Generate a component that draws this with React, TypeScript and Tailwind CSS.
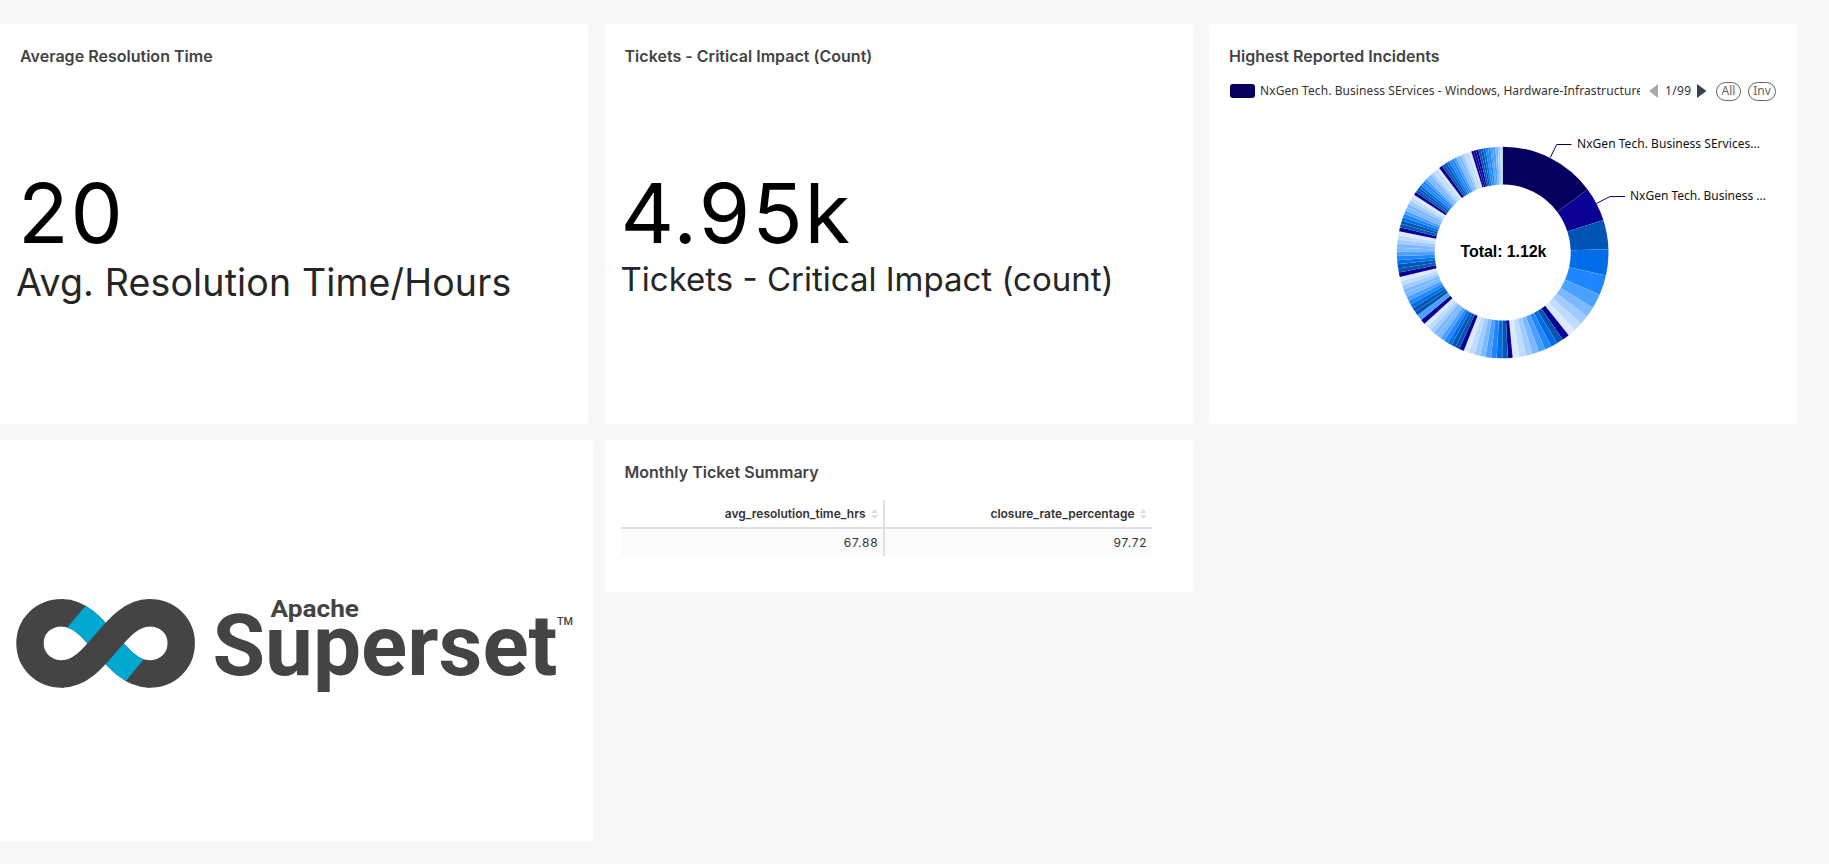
import React from "react";

const BLUES = ["#0055b3", "#006de8", "#1f86ff", "#4a9fff", "#7bb8ff", "#a0ccff", "#bfdcff", "#dbeaff"];
const NAVY = "#0a0096";

type Slice = { from: number; to: number; color: string };

const LEADING: Slice[] = [
  { from: 0, to: 53.4, color: "#05005e" },
  { from: 53.4, to: 72.1, color: NAVY },
  { from: 72.1, to: 88.2, color: BLUES[0] },
  { from: 88.2, to: 102.5, color: BLUES[1] },
  { from: 102.5, to: 113.6, color: BLUES[2] },
  { from: 113.6, to: 121.5, color: BLUES[3] },
  { from: 121.5, to: 127.2, color: BLUES[4] },
  { from: 127.2, to: 132.4, color: BLUES[5] },
  { from: 132.4, to: 137, color: BLUES[6] },
  { from: 137, to: 141.4, color: BLUES[7] },
];

// start, end of the navy slice, end of the cycle, number of blue slices
const CYCLES: [number, number, number, number][] = [
  [141.4, 145.4, 174.6, 8],
  [174.6, 177.2, 201.6, 8],
  [201.6, 204.3, 227.7, 10],
  [233.6, 233.6, 256.6, 10],
  [256.6, 259.1, 281.6, 10],
  [281.6, 283.8, 303.1, 10],
  [303.1, 304.9, 323.1, 12],
  [323.1, 325.1, 342.7, 12],
];

function buildSlices(): Slice[] {
  const out = [...LEADING];
  for (const [start, navyEnd, end, n] of CYCLES) {
    if (navyEnd > start) out.push({ from: start, to: navyEnd, color: NAVY });
    const step = (end - navyEnd) / n;
    for (let i = 0; i < n; i++) {
      out.push({
        from: navyEnd + i * step,
        to: navyEnd + (i + 1) * step,
        color: BLUES[Math.floor((i * BLUES.length) / n)],
      });
    }
  }
  out.push({ from: 227.7, to: 230.4, color: NAVY }, { from: 230.4, to: 233.6, color: BLUES[3] });
  for (let i = 0; i < 3; i++) out.push({ from: 342.7 + i * 1.33, to: 344.03 + i * 1.33, color: NAVY });
  const tail = [0, 0, 1, 2, 2, 3, 3, 4, 5, 6];
  tail.forEach((c, i) => out.push({ from: 346.7 + i * 1.33, to: 348.03 + i * 1.33, color: BLUES[c] }));
  return out;
}

function arc(from: number, to: number) {
  const cx = 293.7;
  const cy = 228.5;
  const p = (deg: number, r: number) => {
    const a = (deg * Math.PI) / 180;
    return `${(cx + r * Math.sin(a)).toFixed(2)} ${(cy - r * Math.cos(a)).toFixed(2)}`;
  };
  return `M${p(from, 105.8)}A105.8 105.8 0 0 1 ${p(to, 105.8)}L${p(to, 68)}A68 68 0 0 0 ${p(from, 68)}Z`;
}

function Title({ children }: { children: React.ReactNode }) {
  return (
    <h2 className="text-base leading-6 font-semibold tracking-[0.02px] text-[#434343] whitespace-nowrap">{children}</h2>
  );
}

function Donut() {
  return (
    <svg className="absolute inset-0" width="588" height="400" viewBox="0 0 588 400">
      {buildSlices().map((s, i) => (
        <path key={i} d={arc(s.from, s.to)} fill={s.color} stroke="#fff" strokeOpacity="0.3" strokeWidth="0.15" />
      ))}
      <path d="M341.3 133.5L347.7 120.5H362.5" fill="none" stroke="#05005e" />
      <path d="M387.5 179.5L401 172.5H416" fill="none" stroke={NAVY} />
      <g className="font-['Noto_Sans',sans-serif]" fontSize="12" fill="#111">
        <text x="368" y="124" textLength="183">NxGen Tech. Business SErvices...</text>
        <text x="421" y="176" textLength="136">NxGen Tech. Business ...</text>
      </g>
      <text x="251.5" y="233" textLength="86" className="font-['Liberation_Sans',sans-serif]" fontSize="16" fontWeight="700">
        Total: 1.12k
      </text>
    </svg>
  );
}

function Legend() {
  return (
    <div className="mt-[11px] ml-px flex h-6 items-center font-['Noto_Sans',sans-serif] text-xs text-[#333]">
      <span className="h-[14px] w-[25px] shrink-0 rounded-[3px] bg-[#05005e]" />
      <svg className="ml-[5px] shrink-0" width="380" height="24">
        <text x="0" y="16" fontSize="12" fill="#333" textLength="383">
          NxGen Tech. Business SErvices - Windows, Hardware-Infrastructure
        </text>
      </svg>
      <svg className="ml-[9px] shrink-0" width="9" height="16"><path d="M9 1V15L0 8Z" fill="#aaa" /></svg>
      <svg className="ml-[7px] shrink-0" width="26" height="24"><text x="0" y="16" fontSize="12" fill="#333" textLength="26">1/99</text></svg>
      <svg className="ml-[6px] shrink-0" width="10" height="16"><path d="M0 1V15L9.5 8Z" fill="#2f4554" /></svg>
      <span className="ml-[9px] flex h-[19px] w-[25px] shrink-0 items-center justify-center rounded-full border border-[#666] text-[#666]">All</span>
      <span className="ml-[7px] flex h-[19px] w-[28px] shrink-0 items-center justify-center rounded-full border border-[#666] text-[#666]">Inv</span>
    </div>
  );
}

function SupersetLogo() {
  return (
    <svg width="592" height="401" viewBox="0 440 592 401">
      <defs>
        <clipPath id="band">
          <path d="M96 593.5L60 636L117 692L152 649Z" />
        </clipPath>
      </defs>
      <g fill="none" strokeWidth="27.4">
        <path stroke="#444" d="M64 612.7H62C43.5 612.7 30 626 30 643.3S43.5 674 62 674H64M147.3 612.7H149.3C168 612.7 181.2 626 181.2 643.3S168 674 149.3 674H147.3" />
        <path stroke="#444" d="M62 612.7C97.5 612.7 113.8 674 149.3 674" />
        <path stroke="#00a8cf" clipPath="url(#band)" d="M62 612.7C97.5 612.7 113.8 674 149.3 674" />
        <path stroke="#444" d="M149.3 612.7C113.8 612.7 97.5 674 62 674" />
      </g>
      <g className="font-[Roboto,sans-serif]" fill="#444">
        <text x="212.5" y="674.8" fontSize="86" fontWeight="700" textLength="345" lengthAdjust="spacingAndGlyphs">Superset</text>
        <text x="270.5" y="617" fontSize="24" fontWeight="700" textLength="88.5" lengthAdjust="spacingAndGlyphs">Apache</text>
        <text x="557" y="625" fontSize="11" fontWeight="500" textLength="16" lengthAdjust="spacingAndGlyphs">TM</text>
      </g>
    </svg>
  );
}

function SortIcon() {
  return (
    <svg width="7" height="12" viewBox="0 0 7 12" fill="#dedede">
      <path d="M3.5 1L6.8 5H.2ZM3.5 11L.2 7H6.8Z" />
    </svg>
  );
}

function SummaryTable() {
  return (
    <div className="mt-4 ml-[-4px] grid w-[531px] grid-cols-[264px_267px] text-xs text-[#333]">
      <div className="flex h-[29px] items-center justify-end gap-[5px] border-r-2 border-b-2 border-[#e0e0e0] pr-[5px] text-[12px] font-semibold">
        avg_resolution_time_hrs <SortIcon />
      </div>
      <div className="flex h-[29px] items-center justify-end gap-[5px] border-b-2 border-[#e0e0e0] pr-[5px] text-[12px] font-semibold">
        closure_rate_percentage <SortIcon />
      </div>
      <div className="flex h-[27px] items-center justify-end border-r-2 border-[#e0e0e0] bg-[#fbfbfb] pr-[4px] tracking-[0.8px]">67.88</div>
      <div className="flex h-[27px] items-center justify-end bg-[#fbfbfb] pr-1 tracking-[0.8px]">97.72</div>
    </div>
  );
}

export default function App() {
  return (
    <main className="h-[864px] w-[1829px] overflow-hidden bg-[#f7f7f7] pt-6 font-[Inter,sans-serif]">
      <div className="flex gap-[16.5px]">
        <section className="h-[400px] w-[588px] rounded-r-[4px] bg-white pt-5 pl-5">
          <Title>Average Resolution Time</Title>
          <div className="-ml-[2px] mt-[95px] text-[83px] leading-[100px] tracking-[1.8px] text-black">20</div>
          <div className="-ml-[4px] text-[37.5px] leading-[40px] tracking-[0.15px] whitespace-nowrap text-[#262626]">Avg. Resolution Time/Hours</div>
        </section>
        <section className="h-[400px] w-[588px] rounded-[4px] bg-white pt-5 pl-5">
          <Title>Tickets - Critical Impact (Count)</Title>
          <div className="-ml-[4px] mt-[95px] text-[83px] leading-[100px] tracking-[2px] text-black">4.95k</div>
          <div className="-ml-[4px] text-[33px] leading-[32px] whitespace-nowrap text-[#262626]">Tickets - Critical Impact (count)</div>
        </section>
        <section className="relative h-[400px] w-[588px] rounded-[4px] bg-white pt-5 pl-5">
          <Title>Highest Reported Incidents</Title>
          <Legend />
          <Donut />
        </section>
      </div>
      <div className="mt-4 flex items-start gap-[12px]">
        <section className="h-[401px] w-[592.5px] rounded-r-[4px] bg-white">
          <SupersetLogo />
        </section>
        <section className="h-[152px] w-[588px] rounded-[4px] bg-white pt-5 pl-5">
          <Title>Monthly Ticket Summary</Title>
          <SummaryTable />
        </section>
      </div>
    </main>
  );
}
